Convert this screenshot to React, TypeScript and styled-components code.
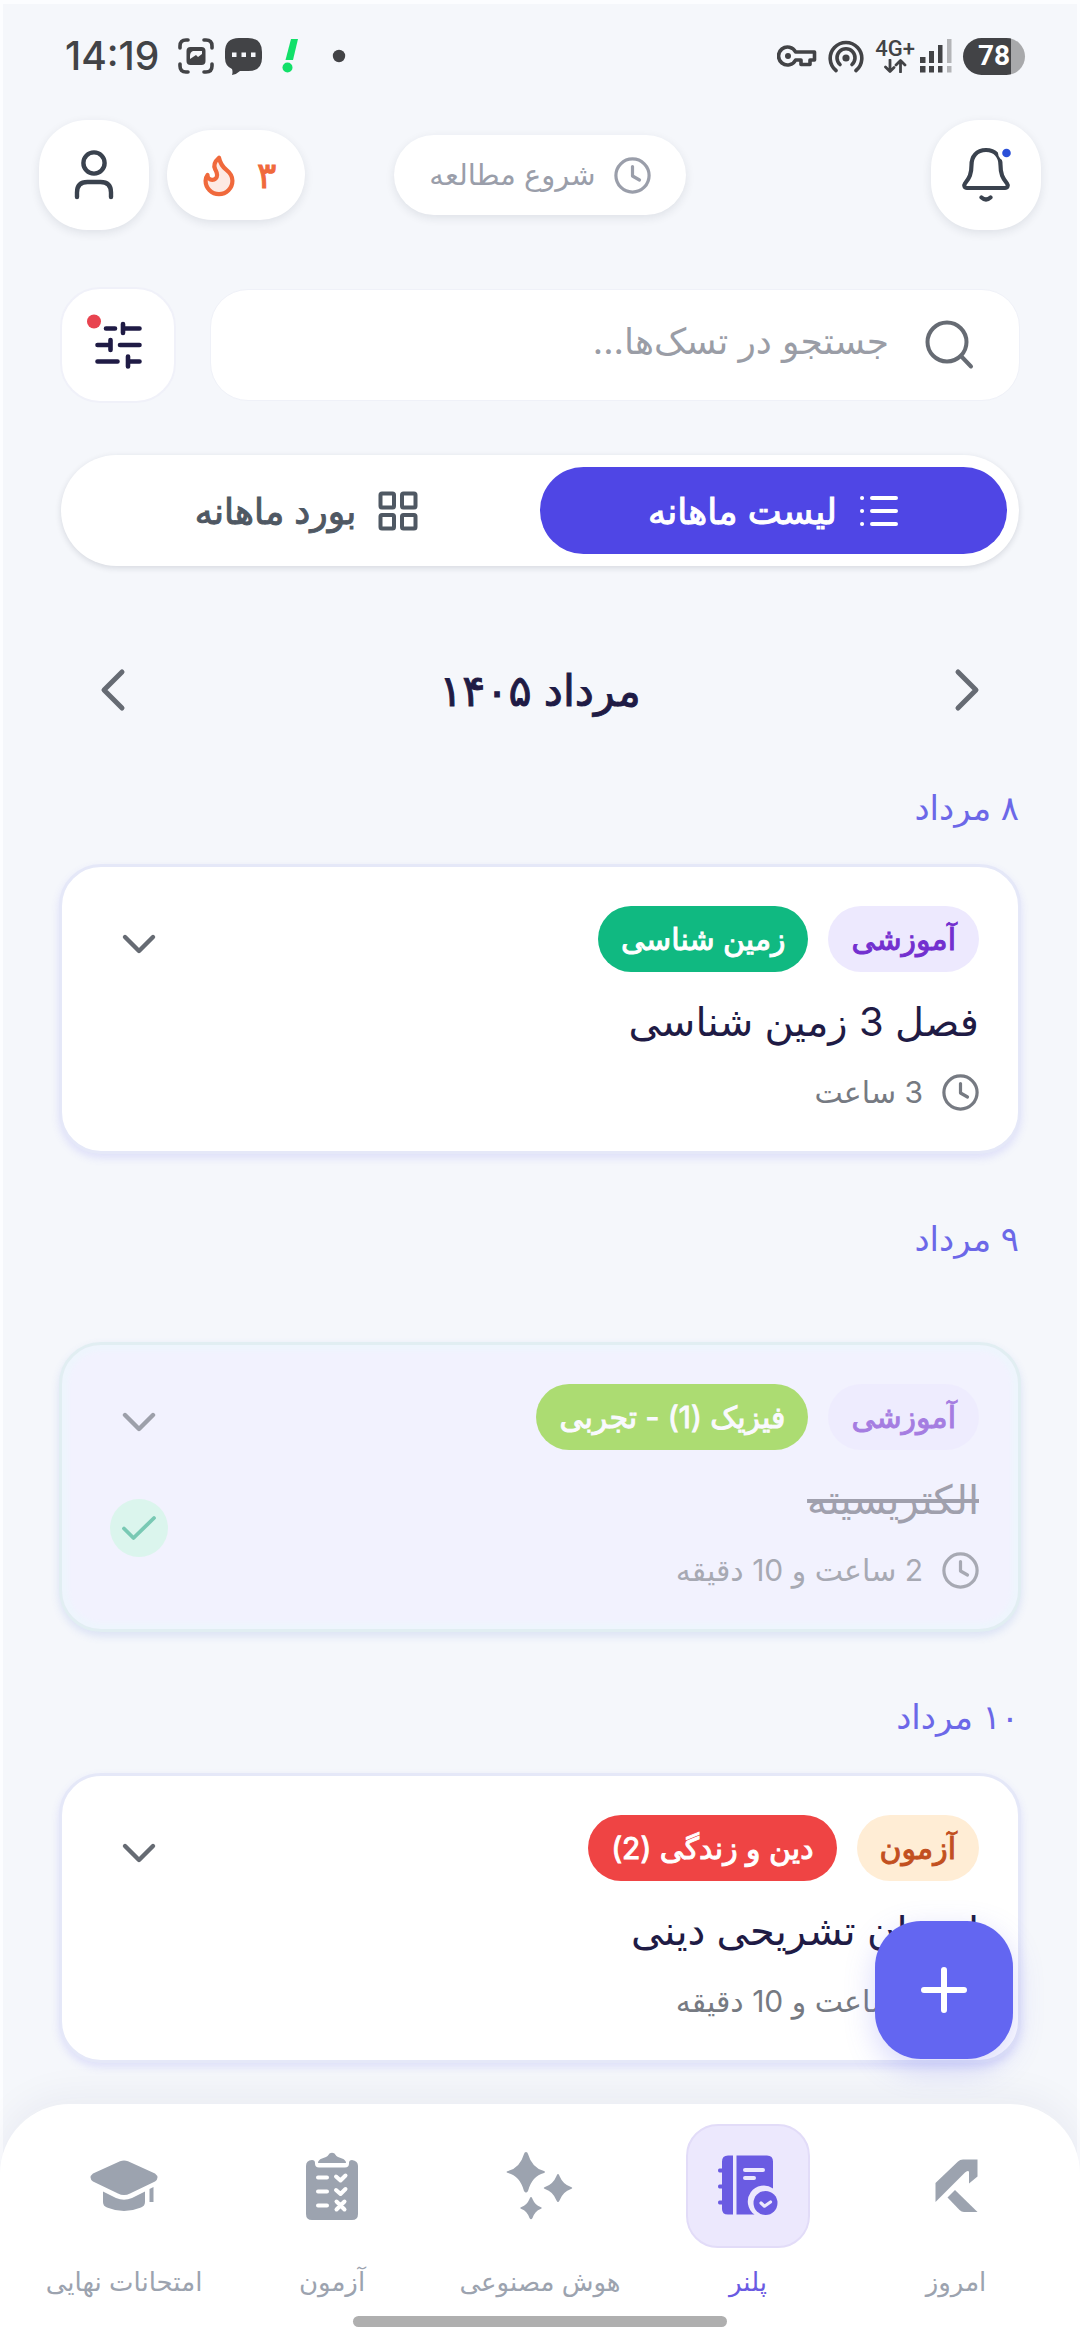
import React, { useState } from "react";
import styled, { createGlobalStyle, css } from "styled-components";

const GlobalStyle = createGlobalStyle`
  *, *::before, *::after { box-sizing: border-box; }
  body {
    margin: 0;
    background: #f5f7fb;
    font-family: Inter, "DejaVu Sans", sans-serif;
    color: #1f1b45;
  }
  button, input { font: inherit; color: inherit; }
  button { border: 0; padding: 0; background: none; cursor: pointer; }
  svg { display: block; flex: none; }
`;

const Page = styled.div`
  min-height: 100vh;
  display: flex;
  flex-direction: column;
  border: solid #fcfdff;
  border-width: 4px 3px 0;
`;

/* ---------- status bar ---------- */

const StatusBar = styled.div`
  direction: ltr;
  display: flex;
  align-items: center;
  justify-content: space-between;
  height: 76px;
  margin-top: 14px;
  padding: 0 52px 0 62px;
  color: #424346;
`;

const StatusGroup = styled.div<{ $gap: number }>`
  display: flex;
  align-items: center;
  gap: ${(p) => p.$gap}px;
`;

const Time = styled.span`
  font-size: 39px;
  line-height: 48px;
  font-weight: 500;
  margin-right: 8px;
`;

const Network = styled.div`
  display: flex;
  flex-direction: column;
  align-items: center;
  font-family: Roboto, sans-serif;
  font-size: 22px;
  line-height: 20px;
  font-weight: 500;
`;

const Battery = styled.span`
  display: flex;
  align-items: center;
  justify-content: center;
  width: 62px;
  height: 37px;
  border-radius: 19px;
  background: linear-gradient(to right, #424346 78%, #a8a9ab 78%);
  color: #fff;
  font-family: Roboto, sans-serif;
  font-size: 28px;
  line-height: 36px;
  font-weight: 700;
`;

/* ---------- header ---------- */

const Header = styled.header`
  display: grid;
  grid-template-columns: 1fr auto 1fr;
  align-items: center;
  margin-top: 26px;
  padding: 0 36px;
`;

const HeaderEnd = styled.div`
  display: flex;
  align-items: center;
  justify-content: flex-end;
  gap: 18px;
`;

const floating = css`
  background: #fff;
  box-shadow: 0 3px 10px rgba(30, 35, 60, 0.1);
  display: flex;
  align-items: center;
  justify-content: center;
`;

const RoundButton = styled.button`
  ${floating}
  width: 110px;
  height: 110px;
  border-radius: 48px;
`;

const StreakPill = styled.button`
  ${floating}
  height: 90px;
  padding: 0 29px;
  gap: 15px;
  border-radius: 45px;
  color: #f0693c;
  font-size: 36px;
  line-height: 48px;
  -webkit-text-stroke: 1px currentColor;
  svg { -webkit-text-stroke: 0; }
`;

const StudyPill = styled.button`
  ${floating}
  height: 80px;
  padding: 0 35px;
  gap: 18px;
  border-radius: 40px;
  color: #9a9eaa;
  font-size: 29px;
  line-height: 48px;
`;

/* ---------- content ---------- */

const Content = styled.main`
  flex: 1;
  display: flex;
  flex-direction: column;
  padding: 57px 56px 36px;
`;

const SearchRow = styled.div`
  display: flex;
  align-items: center;
  gap: 34px;
  padding: 0 1px;
`;

const SearchBox = styled.label`
  flex: 1;
  display: flex;
  align-items: center;
  gap: 36px;
  height: 112px;
  padding: 0 44px;
  border: 1px solid #eff1f8;
  border-radius: 38px;
  background: #fff;
  color: #666b73;
`;

const SearchInput = styled.input`
  flex: 1;
  min-width: 0;
  height: 56px;
  padding: 0 0 8px;
  border: 0;
  outline: 0;
  background: transparent;
  font-size: 36px;
  line-height: 48px;
  &::placeholder { color: #9a9da6; opacity: 1; }
`;

const FilterButton = styled.button`
  display: flex;
  align-items: center;
  justify-content: center;
  width: 116px;
  height: 116px;
  border: 2px solid #f0f1f9;
  border-radius: 40px;
  background: #fff;
`;

const Segmented = styled.div`
  display: flex;
  height: 111px;
  margin: 52px 2px 0;
  padding: 12px;
  border-radius: 56px;
  background: #fff;
  box-shadow: 0 2px 6px rgba(30, 35, 60, 0.14);
`;

const Segment = styled.button<{ $active: boolean }>`
  flex: 1;
  display: flex;
  align-items: center;
  justify-content: center;
  gap: 22px;
  border-radius: 44px;
  background: ${(p) => (p.$active ? "#4f46e5" : "transparent")};
  color: ${(p) => (p.$active ? "#fff" : "#4f5863")};
  font-size: 36px;
  line-height: 48px;
  -webkit-text-stroke: 1px currentColor;
  svg { -webkit-text-stroke: 0; }
`;

const MonthRow = styled.div`
  display: flex;
  align-items: center;
  justify-content: space-between;
  margin-top: 88px;
  padding: 0 18px;
`;

const MonthButton = styled.button`
  display: flex;
  align-items: center;
  justify-content: center;
  width: 72px;
  height: 72px;
  color: #666b73;
`;

const MonthTitle = styled.h1`
  margin: 0;
  font-size: 43px;
  line-height: 64px;
  font-weight: 400;
  -webkit-text-stroke: 1px currentColor;
`;

const Day = styled.section`
  margin-top: 61px;
  &:first-of-type { margin-top: 58px; }
`;

const DayTitle = styled.h2`
  margin: 0;
  padding: 0 2px;
  color: #6c68e8;
  font-size: 34px;
  line-height: 48px;
  font-weight: 400;
`;

const Card = styled.article<{ $done: boolean }>`
  display: flex;
  justify-content: space-between;
  margin-top: ${(p) => (p.$done ? 79 : 32)}px;
  padding: 39px 39px 39px 48px;
  border: 3px solid ${(p) => (p.$done ? "#e1eef2" : "#e5e8f8")};
  border-radius: 42px;
  background: ${(p) => (p.$done ? "#f2f2fe" : "#fff")};
  box-shadow: 0 4px 8px ${(p) => (p.$done ? "rgba(80, 120, 210, 0.16)" : "rgba(99, 102, 241, 0.16)")}
    ${(p) => (p.$done ? ", inset 0 0 4px 6px #eef5fd" : "")};
`;

const Body = styled.div<{ $faded: boolean }>`
  display: flex;
  flex-direction: column;
  gap: 22px;
  opacity: ${(p) => (p.$faded ? 0.6 : 1)};
`;

const Tags = styled.div`
  display: flex;
  gap: 20px;
`;

const Tag = styled.span<{ $bg: string; $fg: string }>`
  display: inline-flex;
  align-items: center;
  height: 66px;
  padding: 0 23px;
  border-radius: 33px;
  background: ${(p) => p.$bg};
  color: ${(p) => p.$fg};
  font-size: 30px;
  line-height: 48px;
  -webkit-text-stroke: 1px currentColor;
`;

const TaskTitle = styled.h3<{ $done: boolean }>`
  margin: 0;
  font-size: 40px;
  line-height: 56px;
  font-weight: 400;
  color: ${(p) => (p.$done ? "#6b6b78" : "#1f1b45")};
  text-decoration: ${(p) => (p.$done ? "line-through" : "none")};
`;

const Meta = styled.div`
  display: flex;
  align-items: center;
  gap: 19px;
  color: #767a82;
  font-size: 30px;
  line-height: 40px;
`;

const Actions = styled.div<{ $faded: boolean }>`
  display: flex;
  flex-direction: column;
  gap: 47px;
  margin-top: 10px;
  opacity: ${(p) => (p.$faded ? 0.6 : 1)};
`;

const IconButton = styled.button<{ $check?: boolean }>`
  display: flex;
  align-items: center;
  justify-content: center;
  width: 58px;
  height: 58px;
  border-radius: 29px;
  background: ${(p) => (p.$check ? "#cdf8e2" : "transparent")};
  color: ${(p) => (p.$check ? "#2aae84" : "#666b73")};
`;

/* ---------- bottom dock ---------- */

const Dock = styled.footer`
  position: relative;
  margin: 0 -3px;
  padding: 20px 20px 16px;
  border-radius: 70px 70px 0 0;
  background: #fff;
  box-shadow: 0 -6px 40px rgba(30, 35, 90, 0.06);
`;

const AddButton = styled.button`
  position: absolute;
  right: 67px;
  bottom: calc(100% + 45px);
  display: flex;
  align-items: center;
  justify-content: center;
  width: 138px;
  height: 138px;
  border-radius: 46px;
  background: #6366f1;
  color: #fff;
  box-shadow: 0 10px 30px rgba(99, 102, 241, 0.25);
`;

const Nav = styled.nav`
  display: flex;
`;

const NavItem = styled.a<{ $active: boolean }>`
  flex: 1;
  display: flex;
  flex-direction: column;
  align-items: center;
  gap: 14px;
  text-decoration: none;
  white-space: nowrap;
  color: ${(p) => (p.$active ? "#6a5be2" : "#9ca3af")};
  font-size: 26px;
  line-height: 40px;
`;

const NavTile = styled.span<{ $active: boolean }>`
  display: flex;
  align-items: center;
  justify-content: center;
  width: 124px;
  height: 124px;
  border: 2px solid ${(p) => (p.$active ? "#e2dcf8" : "transparent")};
  border-radius: 32px;
  background: ${(p) => (p.$active ? "#ece8fd" : "transparent")};
`;

const HomeIndicator = styled.div`
  width: 36%;
  height: 11px;
  margin: 14px auto 0;
  border-radius: 6px;
  background: #afafaf;
`;

/* ---------- icons ---------- */

const stroke = {
  fill: "none",
  stroke: "currentColor",
  strokeLinecap: "round",
  strokeLinejoin: "round",
} as const;

const Clock = () => (
  <svg width="37" height="37" viewBox="0 0 37 37" {...stroke} strokeWidth="3.2">
    <circle cx="18.5" cy="18.5" r="16.6" />
    <path d="M18.5 9.5v9.5l7 4" />
  </svg>
);

const ChevronDown = () => (
  <svg width="36" height="24" viewBox="0 0 36 24" {...stroke} strokeWidth="4.4">
    <path d="M4 4l14 14L32 4" />
  </svg>
);

const ScreenshotIcon = () => (
  <svg width="36" height="36" viewBox="0 0 36 36" {...stroke} strokeWidth="3.6">
    <path d="M2 10V8q0-6 6-6h2M26 2h2q6 0 6 6v2M34 26v2q0 6-6 6h-2M10 34H8q-6 0-6-6v-2" />
    <rect x="8.5" y="9" width="19" height="18" rx="4" fill="currentColor" stroke="none" />
    <path d="M12 18q0-4 3-5h9v3l-4 3-2-2-6 4z" fill="#f5f7fb" stroke="none" />
  </svg>
);

const ChatIcon = () => (
  <svg width="37" height="37" viewBox="0 0 37 37" fill="currentColor">
    <path d="M14 0h9q14 0 14 14v6q0 13-14 13h-8q-3 3-8 4 1-3 0-6-7-3-7-11v-6Q0 0 14 0z" />
    <path d="M7 14.500h4.500v4.500H7zM16.500 14.500H21v4.500h-4.500zM26 14.500h4.500v4.500H26z" fill="#f5f7fb" />
  </svg>
);

const AlertIcon = () => (
  <svg width="18" height="34" viewBox="0 0 18 34" fill="#12e069">
    <path d="M9 0h7l-5 21H3.500z" />
    <circle cx="5.500" cy="28.500" r="5" />
  </svg>
);

const DotIcon = () => (
  <svg width="14" height="14" viewBox="0 0 14 14" fill="currentColor">
    <circle cx="7" cy="7" r="6.200" />
  </svg>
);

const KeyIcon = () => (
  <svg width="40" height="24" viewBox="0 0 40 24" {...stroke} strokeWidth="3.6">
    <path d="M18.600 8A9 9 0 1 0 18.600 16H24v4.500h9V16h4.500V8z" />
    <circle cx="11" cy="12" r="3" fill="currentColor" stroke="none" />
  </svg>
);

const HotspotIcon = () => (
  <svg width="36" height="33" viewBox="0 0 36 33" {...stroke} strokeWidth="3.600">
    <path d="M8 30.500a15.800 15.800 0 1 1 20 0" />
    <path d="M12 24.500a9 9 0 1 1 12 0" />
    <circle cx="18" cy="18" r="3.600" fill="currentColor" stroke="none" />
  </svg>
);

const DataArrows = () => (
  <svg width="24" height="14" viewBox="0 0 24 14" {...stroke} strokeWidth="2.800">
    <path d="M7 1v11M2.500 8L7 12.500 11 8.500M17.500 13V2M13 6l4.500-4.500L22 6" />
  </svg>
);

const SignalIcon = () => (
  <svg width="32" height="34" viewBox="0 0 32 34" fill="currentColor">
    <path d="M0 18h5.500v6H0zM9 12h5v12H9zM18 6h4.500v18H18zM0 27h5.500v6.500H0zM9 27h5v6.500H9zM18 27h4.500v6.500H18z" />
    <path d="M27 0h4.500v24H27zM27 27h4.500v6.500H27z" fill="#b4b5b8" />
  </svg>
);

const UserIcon = () => (
  <svg width="40" height="50" viewBox="0 0 40 50" {...stroke} strokeWidth="4.400" color="#3a424e">
    <circle cx="20" cy="13" r="10.600" />
    <path d="M3 47v-4.500Q3 32 13.500 32h13Q37 32 37 42.500V47" />
  </svg>
);

const FlameIcon = () => (
  <svg width="46" height="46" viewBox="0 0 24 24" {...stroke} strokeWidth="2.200">
    <path
      fill="#fdeae4"
      d="M8.500 14.500A2.500 2.500 0 0 0 11 12c0-1.380-.5-2-1-3-1.072-2.143-.224-4.054 2-6 .5 2.500 2 4.900 4 6.500 2 1.600 3 3.500 3 5.500a7 7 0 1 1-14 0c0-1.153.433-2.294 1-3a2.500 2.500 0 0 0 2.500 2.500z"
    />
  </svg>
);

const BellIcon = () => (
  <svg width="50" height="56" viewBox="0 0 50 56" {...stroke} strokeWidth="4.200" color="#3a424e">
    <path d="M25 3C15.500 3 10.500 9.500 10.500 18C10.500 27 8.500 31 4 36.500C2.500 38.500 3.500 41 6 41H44C46.500 41 47.500 38.500 46 36.500C41.500 31 39.500 27 39.500 18C39.500 9.500 34.500 3 25 3Z" />
    <path d="M20.500 50.500q4.500 4 9 0" />
    <circle cx="45" cy="6" r="8" fill="#fff" stroke="none" />
    <circle cx="45.500" cy="6" r="4.300" fill="#2b50d8" stroke="none" />
  </svg>
);

const SearchIcon = () => (
  <svg width="50" height="50" viewBox="0 0 50 50" {...stroke} strokeWidth="4">
    <circle cx="22" cy="22" r="19.500" />
    <path d="M36 36l10 10.500" />
  </svg>
);

const SlidersIcon = () => (
  <svg width="62" height="62" viewBox="0 0 62 62" {...stroke} strokeWidth="4.600">
    <path d="M19 14.500h9M36 14.500h16.500M36 10v9M10.500 31h12M23.500 26v10M33 31h19.500M10.500 47.500h20M41 47.500h11.500M41 42.500v10" />
    <circle cx="7" cy="7.500" r="11" fill="#fff" stroke="none" />
    <circle cx="7" cy="7.500" r="7" fill="#e8434f" stroke="none" />
  </svg>
);

const ListIcon = () => (
  <svg width="40" height="34" viewBox="0 0 40 34" {...stroke} strokeWidth="4">
    <path d="M13 4h24M13 17h24M13 30h24M3 4h.1M3 17h.1M3 30h.1" />
  </svg>
);

const GridIcon = () => (
  <svg width="40" height="40" viewBox="0 0 40 40" {...stroke} strokeWidth="4">
    <rect x="2.500" y="2.500" width="13.500" height="14" rx="1.500" />
    <rect x="24" y="2.500" width="13.500" height="14" rx="1.500" />
    <rect x="2.500" y="24" width="13.500" height="13.500" rx="1.500" />
    <rect x="24" y="24" width="13.500" height="13.500" rx="1.500" />
  </svg>
);

const MonthChevron = ({ d }: { d: string }) => (
  <svg width="28" height="44" viewBox="0 0 28 44" {...stroke} strokeWidth="5">
    <path d={d} />
  </svg>
);

const CheckIcon = () => (
  <svg width="36" height="28" viewBox="0 0 36 28" {...stroke} strokeWidth="3.800">
    <path d="M3 14.500L12.500 24 33 4" />
  </svg>
);

const PlusIcon = () => (
  <svg width="48" height="48" viewBox="0 0 48 48" {...stroke} strokeWidth="6">
    <path d="M24 4v40M4 24h40" />
  </svg>
);

const TodayIcon = () => (
  <svg width="44" height="54" viewBox="0 0 44 54" fill="currentColor">
    <path d="M1.500 24L24 2.500Q26 .5 29 .5H43.500V17.500L35 24.500V12.500Q33.500 11 31 13.500L1.500 43Z" />
    <path d="M21 31L13.500 38.500 25.500 51Q27.500 53 30 53H43.500Z" />
  </svg>
);

const PlannerIcon = () => (
  <svg width="60" height="62" viewBox="0 0 60 62" fill="currentColor">
    <path d="M10 .500h5v59h-5Q4 59.500 4 54V49.500H1.500Q0 49.500 0 47.500t1.500-2H4V33.500H1.500Q0 33.500 0 31.500t1.500-2H4V17.500H1.500Q0 17.500 0 15.500t1.500-2H4V6.500Q4 .500 10 .500z" />
    <path d="M18.500.500H49q6 0 6 6V33.500A14 14 0 0 0 36.500 59.500H18.500z" />
    <path d="M27 15h18M27 23h9" stroke="#ece8fd" strokeWidth="4" strokeLinecap="round" />
    <circle cx="47.500" cy="48" r="14.500" fill="#ece8fd" />
    <circle cx="47.500" cy="48" r="12" />
    <path d="M43 48l3.500 3.200 6-4.200" fill="none" stroke="#ece8fd" strokeWidth="3.200" strokeLinecap="round" strokeLinejoin="round" />
  </svg>
);

const SparklesIcon = () => (
  <svg width="68" height="68" viewBox="0 0 68 68" fill="currentColor">
    <path d="M20 0Q21.500 0 22 2Q26 16 38 19Q40 20 38 21Q26 24 22 39Q20 42 18 39Q14 24 2 21Q-1 20 2 19Q14 16 18 2Q18.500 0 20 0Z" />
    <path d="M52 22Q53 22 53.500 24Q57 32.500 65 35Q67.500 36 65 37Q57 39.500 53.500 48.500Q52 51.500 50.500 48.500Q47 39.500 39 37Q36.500 36 39 35Q47 32.500 50.500 24Q51 22 52 22Z" />
    <path d="M25 45Q26 45 26.500 47Q29 53 34.500 55Q37 56 34.500 57Q29 59 26.500 66Q25 68.500 23.500 66Q21 59 15.500 57Q13 56 15.500 55Q21 53 23.500 47Q24 45 25 45Z" />
  </svg>
);

const ClipboardIcon = () => (
  <svg width="52" height="68" viewBox="0 0 52 68" fill="currentColor">
    <path d="M6 8q3 0 3 3v.5q0 4 4 4h26q4 0 4-4V11q0-3 3-3 6 1 6 6v48q0 6-6 6H6q-6 0-6-6V14Q0 8.500 6 8z" />
    <path d="M12 11q0-3 4-4.500L20 5q2-1 3.500-3.500Q26 0 28.500 1.500 30 4 32 5l4 1.500q4 1.500 4 4.500z" />
    <path d="M12 25.500h9M12 39.500h9M12 53.500h9M30 24.500l4.500 4 5-5M30 38l4.500 4 5-5M30.500 49.500l8 8M38.500 49.500l-8 8" fill="none" stroke="#fff" strokeWidth="4" strokeLinecap="round" strokeLinejoin="round" />
  </svg>
);

const CapIcon = () => (
  <svg width="68" height="52" viewBox="0 0 68 52" fill="currentColor">
    <path d="M30 1.300Q34-.5 38 1.300L65 13.500Q70 17.500 65 21.500L40 33.500Q34 36.500 28 33.500L3 21.500Q-2 17.500 3 13.500Z" />
    <path d="M13 31.500L26 38Q34 41.500 42 38L55 31.500V42Q55 46 51 47.500Q34 54.500 17 47.500Q13 46 13 42Z" />
    <path d="M59.500 29l4-2V42h-4z" />
  </svg>
);

/* ---------- data ---------- */

type Task = {
  day: string;
  kind: { text: string; bg: string; fg: string };
  subject: { text: string; bg: string };
  title: string;
  time: string;
  done: boolean;
};

const lesson = { text: "آموزشی", bg: "#ede9fe", fg: "#7330cf" };

const tasks: Task[] = [
  {
    day: "۸ مرداد",
    kind: lesson,
    subject: { text: "زمین شناسی", bg: "#10b981" },
    title: "فصل 3 زمین شناسی",
    time: "3 ساعت",
    done: false,
  },
  {
    day: "۹ مرداد",
    kind: lesson,
    subject: { text: "فیزیک (1) - تجربی", bg: "#7fcf16" },
    title: "الکتریسیته",
    time: "2 ساعت و 10 دقیقه",
    done: true,
  },
  {
    day: "۱۰ مرداد",
    kind: { text: "آزمون", bg: "#ffedd5", fg: "#c2501f" },
    subject: { text: "دین و زندگی (2)", bg: "#ef4444" },
    title: "امتحان تشریحی دینی",
    time: "2 ساعت و 10 دقیقه",
    done: false,
  },
];

const navItems = [
  { label: "امروز", icon: <TodayIcon /> },
  { label: "پلنر", icon: <PlannerIcon /> },
  { label: "هوش مصنوعی", icon: <SparklesIcon /> },
  { label: "آزمون", icon: <ClipboardIcon /> },
  { label: "امتحانات نهایی", icon: <CapIcon /> },
];

const TaskCard = ({ task }: { task: Task }) => (
  <Card $done={task.done}>
    <Body $faded={task.done}>
      <Tags>
        <Tag $bg={task.kind.bg} $fg={task.kind.fg}>{task.kind.text}</Tag>
        <Tag $bg={task.subject.bg} $fg="#fff">{task.subject.text}</Tag>
      </Tags>
      <TaskTitle $done={task.done}>{task.title}</TaskTitle>
      <Meta>
        <Clock />
        <span>{task.time}</span>
      </Meta>
    </Body>
    <Actions $faded={task.done}>
      <IconButton aria-label="جزئیات"><ChevronDown /></IconButton>
      {task.done && <IconButton $check aria-label="انجام شد"><CheckIcon /></IconButton>}
    </Actions>
  </Card>
);

export default function App() {
  const [view, setView] = useState<"list" | "board">("list");
  return (
    <Page dir="rtl" lang="fa">
      <GlobalStyle />
      <StatusBar>
        <StatusGroup $gap={20}>
          <StatusGroup $gap={11}>
            <Time>14:19</Time>
            <ScreenshotIcon />
            <ChatIcon />
          </StatusGroup>
          <StatusGroup $gap={32}>
            <AlertIcon />
            <DotIcon />
          </StatusGroup>
        </StatusGroup>
        <StatusGroup $gap={11}>
          <KeyIcon />
          <HotspotIcon />
          <StatusGroup $gap={5}>
            <Network>
              <span>4G+</span>
              <DataArrows />
            </Network>
            <SignalIcon />
          </StatusGroup>
          <Battery>78</Battery>
        </StatusGroup>
      </StatusBar>

      <Header>
        <RoundButton aria-label="اعلان‌ها"><BellIcon /></RoundButton>
        <StudyPill>
          <Clock />
          <span>شروع مطالعه</span>
        </StudyPill>
        <HeaderEnd>
          <StreakPill>
            <span>۳</span>
            <FlameIcon />
          </StreakPill>
          <RoundButton aria-label="پروفایل"><UserIcon /></RoundButton>
        </HeaderEnd>
      </Header>

      <Content>
        <SearchRow>
          <SearchBox>
            <SearchIcon />
            <SearchInput type="text" aria-label="جستجو" placeholder="جستجو در تسک‌ها..." />
          </SearchBox>
          <FilterButton aria-label="فیلتر"><SlidersIcon /></FilterButton>
        </SearchRow>

        <Segmented role="tablist">
          <Segment role="tab" aria-selected={view === "list"} $active={view === "list"} onClick={() => setView("list")}>
            <ListIcon />
            <span>لیست ماهانه</span>
          </Segment>
          <Segment role="tab" aria-selected={view === "board"} $active={view === "board"} onClick={() => setView("board")}>
            <GridIcon />
            <span>بورد ماهانه</span>
          </Segment>
        </Segmented>

        <MonthRow>
          <MonthButton aria-label="ماه قبل"><MonthChevron d="M5 4l18 18L5 40" /></MonthButton>
          <MonthTitle>مرداد ۱۴۰۵</MonthTitle>
          <MonthButton aria-label="ماه بعد"><MonthChevron d="M23 4L5 22l18 18" /></MonthButton>
        </MonthRow>

        {tasks.map((task) => (
          <Day key={task.day}>
            <DayTitle>{task.day}</DayTitle>
            <TaskCard task={task} />
          </Day>
        ))}
      </Content>

      <Dock>
        <AddButton aria-label="افزودن"><PlusIcon /></AddButton>
        <Nav>
          {navItems.map((item, i) => (
            <NavItem key={item.label} href="#" $active={i === 1}>
              <NavTile $active={i === 1}>{item.icon}</NavTile>
              <span>{item.label}</span>
            </NavItem>
          ))}
        </Nav>
        <HomeIndicator />
      </Dock>
    </Page>
  );
}
